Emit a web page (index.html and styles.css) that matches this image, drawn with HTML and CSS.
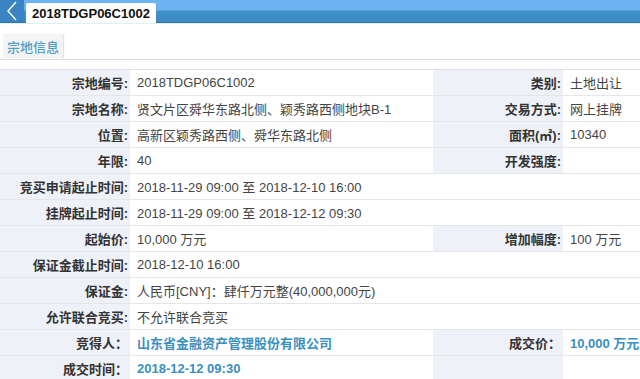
FILE: index.html
```html
<!DOCTYPE html>
<html lang="zh">
<head>
<meta charset="utf-8">
<link rel="stylesheet" href="styles.css">
</head>
<body>
<div class="topbar">
  <div class="back"><svg width="14" height="20" viewBox="0 0 14 20"><path d="M11 1 L3 10 L11 19" fill="none" stroke="#fff" stroke-width="1.4"/></svg></div>
  <div class="tab">2018TDGP06C1002</div>
</div>
<div class="section">
  <div class="secbtn">宗地信息</div>
</div>
<table class="info">
  <colgroup><col class="c1"><col class="c2"><col class="c3"><col class="c4"></colgroup>
  <tr><td class="lab">宗地编号:</td><td class="val">2018TDGP06C1002</td><td class="lab">类别:</td><td class="val">土地出让</td></tr>
  <tr><td class="lab">宗地名称:</td><td class="val">贤文片区舜华东路北侧、颖秀路西侧地块B-1</td><td class="lab">交易方式:</td><td class="val">网上挂牌</td></tr>
  <tr><td class="lab">位置:</td><td class="val">高新区颖秀路西侧、舜华东路北侧</td><td class="lab">面积(㎡):</td><td class="val">10340</td></tr>
  <tr><td class="lab">年限:</td><td class="val">40</td><td class="lab">开发强度:</td><td class="val"></td></tr>
  <tr><td class="lab">竞买申请起止时间:</td><td class="val" colspan="3">2018-11-29 09:00 至 2018-12-10 16:00</td></tr>
  <tr><td class="lab">挂牌起止时间:</td><td class="val" colspan="3">2018-11-29 09:00 至 2018-12-12 09:30</td></tr>
  <tr><td class="lab">起始价:</td><td class="val">10,000 万元</td><td class="lab">增加幅度:</td><td class="val">100 万元</td></tr>
  <tr><td class="lab">保证金截止时间:</td><td class="val" colspan="3">2018-12-10 16:00</td></tr>
  <tr><td class="lab">保证金:</td><td class="val" colspan="3">人民币[CNY]：肆仟万元整(40,000,000元)</td></tr>
  <tr><td class="lab">允许联合竞买:</td><td class="val" colspan="3">不允许联合竞买</td></tr>
  <tr><td class="lab">竞得人：</td><td class="val hl">山东省金融资产管理股份有限公司</td><td class="lab">成交价：</td><td class="val hl">10,000 万元</td></tr>
  <tr><td class="lab">成交时间：</td><td class="val hl">2018-12-12 09:30</td><td class="lab"></td><td class="val"></td></tr>
</table>
</body>
</html>
```
FILE: styles.css
```css
html, body {
  margin: 0;
  padding: 0;
  background: #fff;
  font-family: "Liberation Sans", "Noto Sans CJK SC", sans-serif;
  font-size: 13px;
  color: #333;
  overflow: hidden;
}
.topbar {
  height: 22px;
  background: linear-gradient(#6cb4f1 0, #6cb4f1 10px, #3f90c7 11px, #3d8cc3 22px);
  border-bottom: 1px solid #3b7388;
  box-shadow: 0 1px 0 #d6f3f8;
  display: flex;
  align-items: flex-end;
}
.back {
  width: 24px;
  height: 22px;
  background: #3a84c4;
  display: flex;
  align-items: center;
  justify-content: center;
}
.tab {
  margin-left: 2px;
  width: 130px;
  height: 20px;
  background: #fff;
  border-radius: 2px 2px 0 0;
  font-weight: bold;
  font-size: 13px;
  color: #111;
  display: flex;
  align-items: center;
  justify-content: center;
  margin-bottom: -1px;
  position: relative;
}
.section {
  height: 36px;
  border-bottom: 1px solid #dcdcdc;
  display: flex;
  align-items: flex-end;
  padding-left: 3px;
}
.secbtn {
  width: 60px;
  height: 24px;
  margin-bottom: 1px;
  background: #f4f4f4;
  box-shadow: 1px 0 1px #e2e2e2;
  color: #4d9cc4;
  font-size: 13px;
  font-weight: 500;
  display: flex;
  align-items: center;
  justify-content: center;
}
.info {
  margin-top: 9px;
  width: 640px;
  border-collapse: collapse;
  table-layout: fixed;
  border-top: 1px solid #e0e0e0;
}
.c1 { width: 130px; }
.c2 { width: 303px; }
.c3 { width: 130px; }
.c4 { width: 77px; }
.info td {
  height: 25px;
  padding: 0;
  border-bottom: 1px solid #e6e6e6;
  white-space: nowrap;
  overflow: visible;
}
.lab {
  background: #eff1f9;
  text-align: right;
  padding-right: 2px !important;
  font-weight: bold;
  color: #333;
}
.val {
  padding-left: 7px !important;
  color: #444;
}
.hl {
  color: #3a8fbf;
  font-weight: bold;
}
```
